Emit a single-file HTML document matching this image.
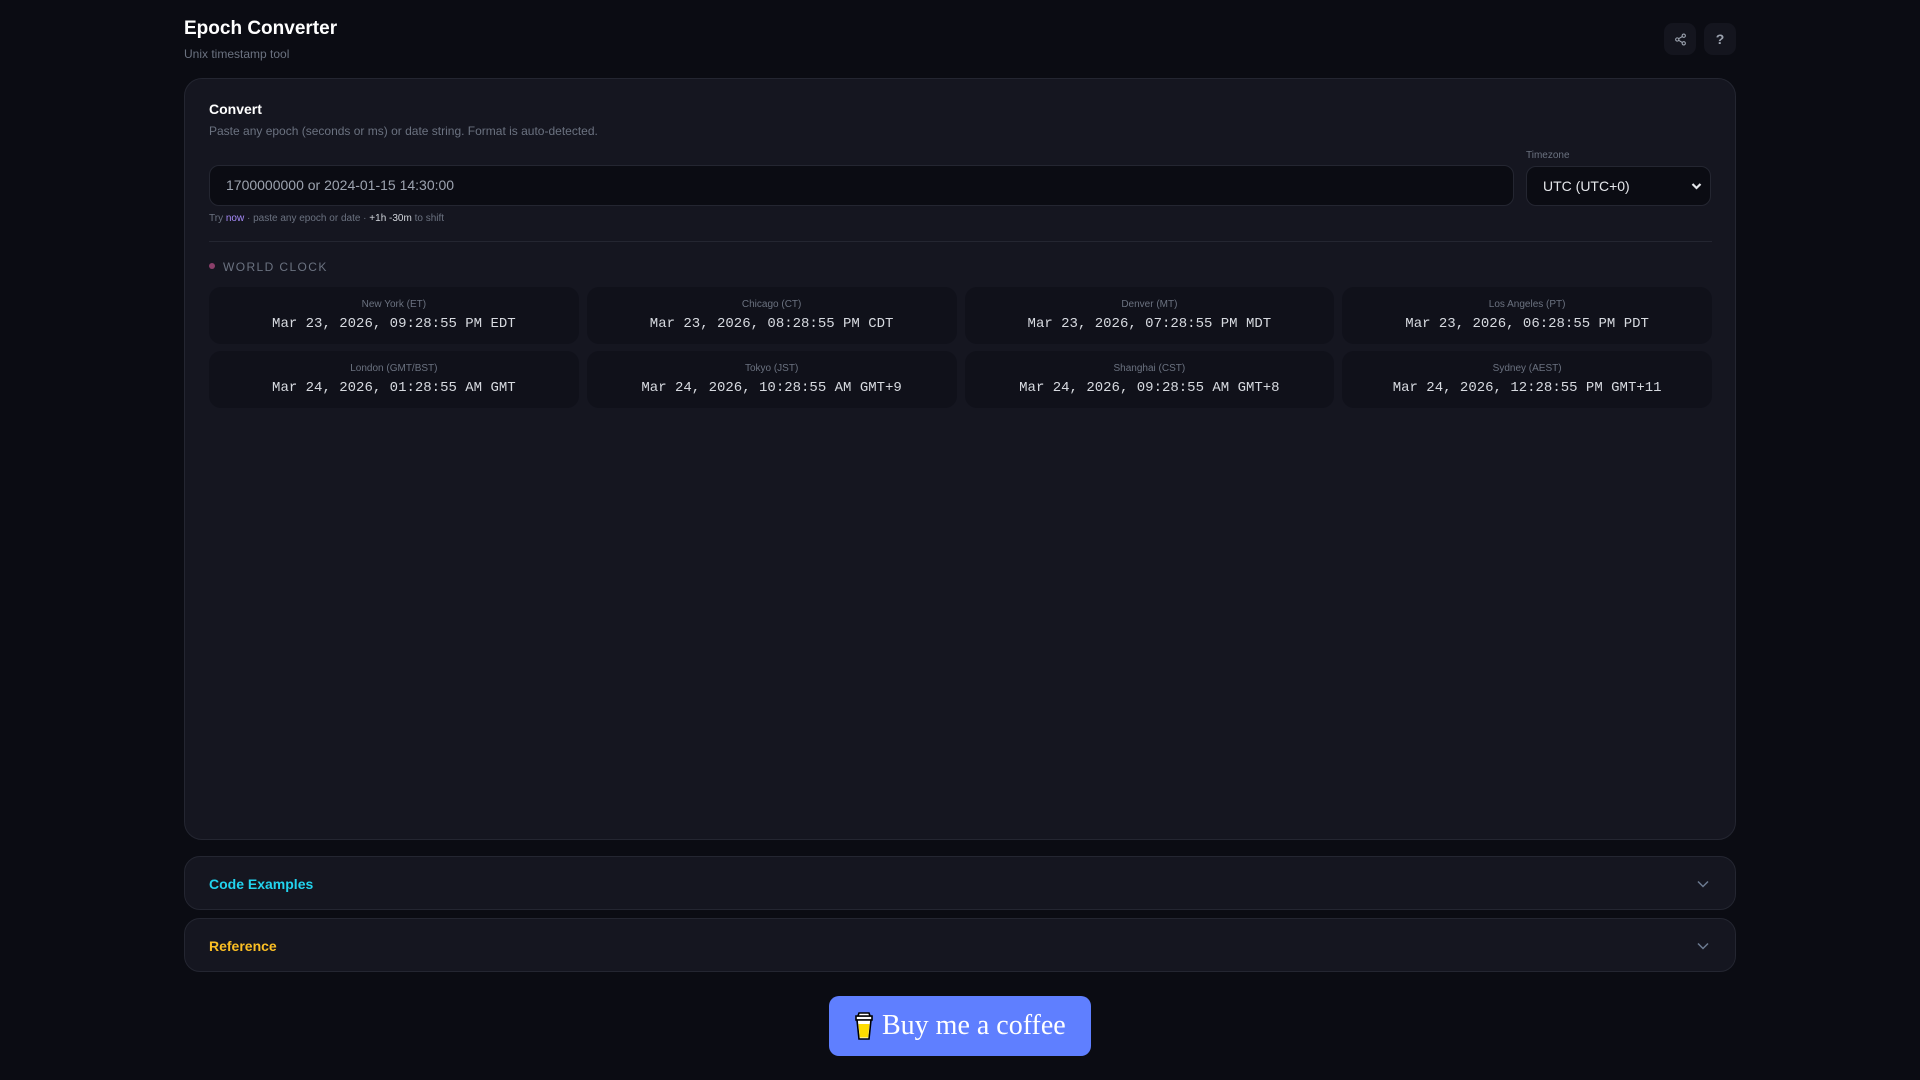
<!DOCTYPE html>
<html><head><meta charset="utf-8"><style>
*{box-sizing:border-box;margin:0;padding:0}
body{width:1920px;height:1080px;background:#0b0c13;font-family:"Liberation Sans",sans-serif;color:#e5e7eb;position:relative;overflow:hidden}
.abs{position:absolute}
.card{left:184px;top:78px;width:1552px;height:762px;background:#151620;border:1px solid #242631;border-radius:18px}
.btn{width:32px;height:32px;top:23px;background:#14151e;border-radius:9px;display:flex;align-items:center;justify-content:center;color:#9ca3af;font-weight:bold;font-size:14px}
.clk{background:#10111a;border-radius:12px;height:57px;text-align:center}
.clk .l{font-size:10px;color:#6b7280;margin-top:12px}
.clk .t{font-family:"Liberation Mono",monospace;font-size:14px;color:#d7dae0;margin-top:6px}
.panel{left:184px;width:1552px;height:54px;background:#151620;border:1px solid #242631;border-radius:16px}
.panel span{position:absolute;left:24px;top:19px;font-size:14px;font-weight:bold}
.panel svg{position:absolute;right:26px;top:23px}
</style></head><body>
<div class="abs" style="left:184px;top:18px;font-size:19px;font-weight:bold;color:#fff">Epoch Converter</div>
<div class="abs" style="left:184px;top:47px;font-size:12px;color:#6b7280">Unix timestamp tool</div>
<div class="abs btn" style="left:1664px"><svg width="13" height="13" viewBox="0 0 24 24" fill="none" stroke="#9ca3af" stroke-width="2"><circle cx="18" cy="5" r="3"/><circle cx="6" cy="12" r="3"/><circle cx="18" cy="19" r="3"/><path d="M8.6 13.5l6.8 4M15.4 6.5l-6.8 4"/></svg></div>
<div class="abs btn" style="left:1704px">?</div>
<div class="abs card">
<div class="abs" style="left:24px;top:22px;font-size:14px;font-weight:bold;color:#fff">Convert</div>
<div class="abs" style="left:24px;top:45px;font-size:12px;color:#6b7280">Paste any epoch (seconds or ms) or date string. Format is auto-detected.</div>
<div class="abs" style="left:24px;top:86px;width:1305px;height:41px;background:#0b0c13;border:1px solid #242631;border-radius:10px;padding:11px 16px;font-size:14px;color:#9ca3af">1700000000 or 2024-01-15 14:30:00</div>
<div class="abs" style="left:1341px;top:71px;font-size:10px;color:#6b7280">Timezone</div>
<div class="abs" style="left:1341px;top:87px;width:185px;height:40px;background:#0b0c13;border:1px solid #242631;border-radius:10px;padding:11px 16px;font-size:14px;color:#e5e7eb">UTC (UTC+0)<svg style="position:absolute;right:8px;top:15px" width="11" height="9" viewBox="0 0 11 9"><path d="M1.5 2l4 4 4-4" fill="none" stroke="#e5e7eb" stroke-width="2.2"/></svg></div>
<div class="abs" style="left:24px;top:134px;font-size:10px;color:#6b7280">Try <span style="color:#a78bfa">now</span> · paste any epoch or date · <span style="color:#d1d5db">+1h -30m</span> to shift</div>
<div class="abs" style="left:24px;top:162px;width:1503px;height:1px;background:#242631"></div>
<div class="abs" style="left:24px;top:184px;width:6px;height:6px;border-radius:50%;background:#8b3f6a"></div>
<div class="abs" style="left:38px;top:181px;font-size:12px;letter-spacing:1.4px;color:#6b7280">WORLD CLOCK</div>
<div class="abs" style="left:24px;top:208px;width:1503px;display:grid;grid-template-columns:repeat(4,1fr);gap:7px 8px">
<div class="clk"><div class="l">New York (ET)</div><div class="t">Mar 23, 2026, 09:28:55 PM EDT</div></div>
<div class="clk"><div class="l">Chicago (CT)</div><div class="t">Mar 23, 2026, 08:28:55 PM CDT</div></div>
<div class="clk"><div class="l">Denver (MT)</div><div class="t">Mar 23, 2026, 07:28:55 PM MDT</div></div>
<div class="clk"><div class="l">Los Angeles (PT)</div><div class="t">Mar 23, 2026, 06:28:55 PM PDT</div></div>
<div class="clk"><div class="l">London (GMT/BST)</div><div class="t">Mar 24, 2026, 01:28:55 AM GMT</div></div>
<div class="clk"><div class="l">Tokyo (JST)</div><div class="t">Mar 24, 2026, 10:28:55 AM GMT+9</div></div>
<div class="clk"><div class="l">Shanghai (CST)</div><div class="t">Mar 24, 2026, 09:28:55 AM GMT+8</div></div>
<div class="clk"><div class="l">Sydney (AEST)</div><div class="t">Mar 24, 2026, 12:28:55 PM GMT+11</div></div>
</div>
</div>
<div class="abs panel" style="top:856px"><span style="color:#22d3ee">Code Examples</span><svg width="12" height="8" viewBox="0 0 12 8"><path d="M1 1.5l5 5 5-5" fill="none" stroke="#6b7a90" stroke-width="1.5"/></svg></div>
<div class="abs panel" style="top:918px"><span style="color:#fbbf24">Reference</span><svg width="12" height="8" viewBox="0 0 12 8"><path d="M1 1.5l5 5 5-5" fill="none" stroke="#6b7a90" stroke-width="1.5"/></svg></div>
<div class="abs" style="left:829px;top:996px;width:262px;height:60px;background:#5f7fff;border-radius:10px;display:flex;align-items:center;padding-left:25px">
<svg width="20" height="30" viewBox="0 0 20 30"><path d="M2 5h16v4H2z" fill="#fff" stroke="#000" stroke-width="1.6"/><path d="M5 2h10l1 3H4z" fill="#fff" stroke="#000" stroke-width="1.6"/><path d="M3 9h14l-2 19H5z" fill="#fff" stroke="#000" stroke-width="1.6"/><path d="M4.5 13h11l-1.3 13.5H5.8z" fill="#ffdd00"/></svg>
<span style="font-family:'Liberation Serif',serif;font-size:28px;color:#fff;margin-left:8px">Buy me a coffee</span></div>
</body></html>
